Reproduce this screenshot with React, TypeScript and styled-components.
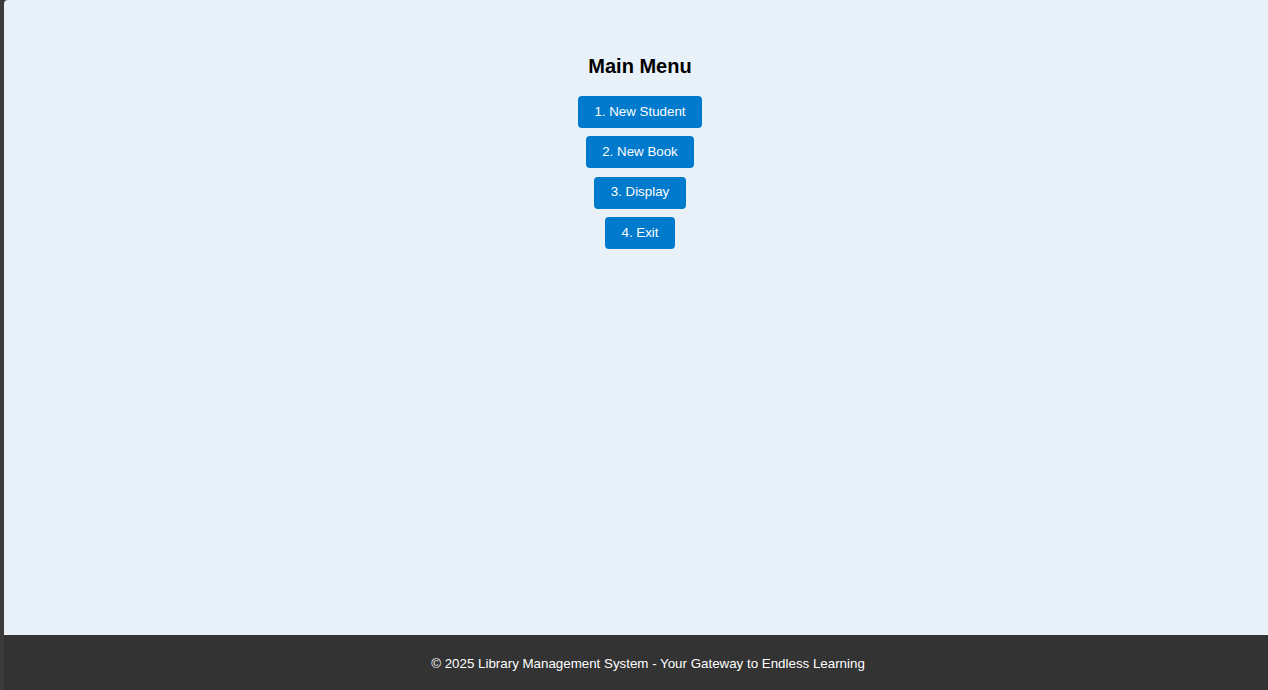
import styled, { createGlobalStyle } from "styled-components";

const GlobalStyle = createGlobalStyle`
  html, body {
    margin: 0;
    padding: 0;
    height: 100%;
  }
  body {
    background: #3b3b3b;
    font-family: "Liberation Sans", Arial, sans-serif;
  }
  #root {
    height: 100%;
  }
`;

const items = ["1. New Student", "2. New Book", "3. Display", "4. Exit"];

export default function App() {
  return (
    <>
      <GlobalStyle />
      <Page>
        <Main>
          <Title>Main Menu</Title>
          <Menu>
            {items.map((label) => (
              <MenuButton key={label}>{label}</MenuButton>
            ))}
          </Menu>
        </Main>
        <Footer>
          <FooterText>
            © 2025 Library Management System - Your Gateway to Endless Learning
          </FooterText>
        </Footer>
      </Page>
    </>
  );
}

const Page = styled.div`
  display: flex;
  flex-direction: column;
  height: 100%;
  margin-left: 4px;
`;

const Main = styled.main`
  flex: 1;
  background: #e8f0f8;
  border-top-left-radius: 4px;
  padding: 55px 0 0 8px;
  display: flex;
  flex-direction: column;
  align-items: center;
`;

const Title = styled.h2`
  margin: 0 0 18px;
  font-size: 20px;
  font-weight: 700;
  color: #000;
`;

const Menu = styled.div`
  display: flex;
  flex-direction: column;
  align-items: center;
  gap: 8.4px;
`;

const MenuButton = styled.button`
  height: 32px;
  padding: 0 16.5px 2px;
  border: none;
  border-radius: 4px;
  background: #007acc;
  color: #fff;
  font-family: "Liberation Sans", Arial, sans-serif;
  font-size: 13.333px;
  cursor: pointer;
`;

const Footer = styled.footer`
  height: 55px;
  background: #333;
  display: flex;
  align-items: center;
  justify-content: center;
  padding: 2px 0 0 24px;
  box-sizing: border-box;
`;

const FooterText = styled.p`
  margin: 0;
  color: #fff;
  font-size: 13.333px;
`;
